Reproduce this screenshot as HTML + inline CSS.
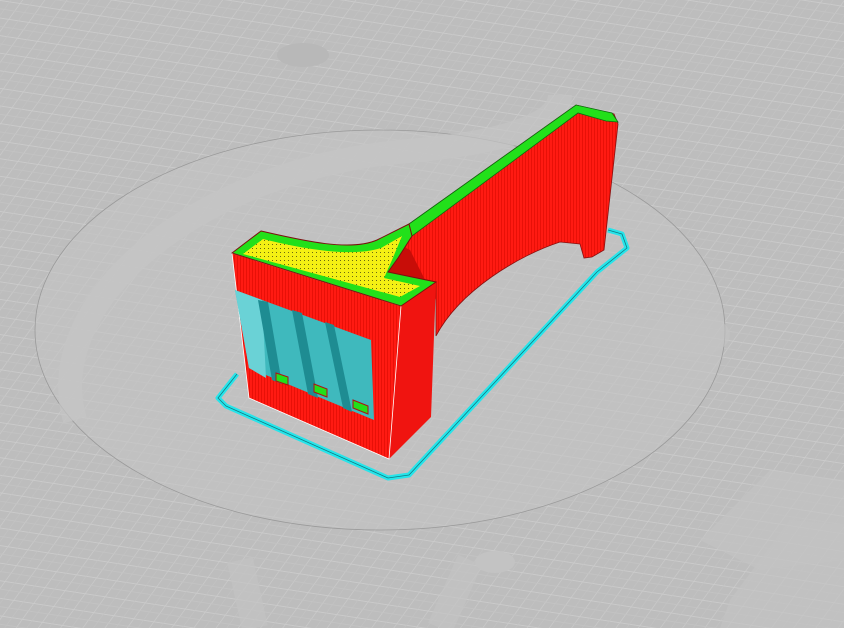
<!DOCTYPE html>
<html><head><style>
html,body{margin:0;padding:0;width:844px;height:628px;overflow:hidden;background:#bcbcbc;}
svg{display:block}
</style></head><body>
<svg width="844" height="628" viewBox="0 0 844 628" xmlns="http://www.w3.org/2000/svg">
<defs>
<pattern id="g" width="22" height="16" patternUnits="userSpaceOnUse" patternTransform="skewX(-30) rotate(8)">
<rect width="22" height="16" fill="#bdbdbd"/>
<path d="M0 0H22M0 0V16" stroke="#cbcbcb" stroke-width="1.6"/>
<path d="M11 0V16M0 8H22" stroke="#c3c3c3" stroke-width="0.8"/>
</pattern>
<pattern id="r" width="3" height="3" patternUnits="userSpaceOnUse">
<rect width="3" height="3" fill="#ff1a12"/><rect width="1" height="3" fill="#e81008"/>
</pattern>
<pattern id="y" width="4" height="4" patternUnits="userSpaceOnUse">
<rect width="4" height="4" fill="#f4f014"/><rect width="1" height="1" fill="#6a6a10"/>
</pattern>
</defs>
<rect width="844" height="628" fill="url(#g)"/>
<!-- logo shapes -->
<ellipse cx="380" cy="330" rx="345" ry="200" fill="#c4c4c4" fill-opacity="0.55" stroke="#9a9a9a" stroke-width="0.8"/>
<path d="M75 420 C40 300 200 165 420 150 C520 140 560 120 560 95" fill="none" stroke="#c4c4c4" stroke-opacity="0.7" stroke-width="24"/>
<ellipse cx="303" cy="55" rx="26" ry="12" fill="#b8b8b8"/>
<ellipse cx="690" cy="335" rx="40" ry="22" fill="#c3c3c3" fill-opacity="0.6"/>
<path d="M240 560 L255 628 M470 560 L440 628" stroke="#c3c3c3" stroke-opacity="0.7" stroke-width="26"/>
<ellipse cx="495" cy="562" rx="20" ry="11" fill="#c3c3c3"/>
<path d="M700 540 L770 470 L844 480 L844 560 L760 570 Z" fill="#c3c3c3" fill-opacity="0.6"/>
<path d="M730 600 L790 520 L844 525 L844 628 L720 628 Z" fill="#c3c3c3" fill-opacity="0.6"/>
<!-- skirt -->
<g fill="none" stroke-linejoin="round">
<path d="M237 374 L218 398 L226 406 L388 478 L409 475 L597 272 L627 248 L622 234 L608 230" stroke="#27e4ea" stroke-width="5"/>
<path d="M237 374 L218 398 L226 406 L388 478 L409 475 L597 272 L627 248 L622 234 L608 230" stroke="#0d7c82" stroke-width="0.8"/>
</g>
<!-- long wall -->
<path d="M396 240 L409 224 L576 105 L614 114 L618 124 L604 250 L592 257 L584 258 L580 244 L560 242 C520 255 460 290 436 336 L436 282 L388 272 Z" fill="url(#r)" stroke="#8a1010" stroke-width="0.8"/>
<path d="M398 244 L388 272 L436 282 L436 300 C430 290 420 270 410 250 Z" fill="#c80d08"/>
<path d="M409 224 L576 105 L612 113 L618 122 L606 121 L578 113 L412 236 Z" fill="#22e01a" stroke="#0f6a0f" stroke-width="0.8"/>
<!-- right side face -->
<path d="M401 306 L436 282 L431 417 L389 459 Z" fill="#f01410"/>
<!-- front face -->
<path d="M232 253 L401 306 L389 459 L249 398 Z" fill="url(#r)" stroke="#fff" stroke-width="0.8"/>
<!-- top -->
<path d="M232 253 L261 231 C300 240 350 252 377 240 L409 224 L412 236 L398 258 L388 272 L436 282 L401 306 Z" fill="#22e01a" stroke="#7a1010" stroke-width="1"/>
<path d="M243 254 L263 239 C300 248 350 258 381 248 L402 236 L392 260 L384 278 L420 286 L400 297 Z" fill="url(#y)"/>
<!-- teal window -->
<path d="M235 290 L371 340 L374 420 L249 368 Z" fill="#3fb9bd"/>
<path d="M235 290 L262 300 L266 378 L249 368 Z" fill="#6ad2d6"/>
<path d="M258 300 L268 302 L282 384 L272 380 Z M292 310 L302 313 L318 398 L308 394 Z M325 322 L334 325 L352 412 L343 408 Z" fill="#1e8c92"/>
<path d="M276 373 L288 377 L288 385 L276 381 Z M314 384 L327 389 L327 397 L314 392 Z M353 400 L368 406 L368 414 L353 408 Z" fill="#22e01a" stroke="#b01010" stroke-width="1"/>
</svg>
</body></html>
